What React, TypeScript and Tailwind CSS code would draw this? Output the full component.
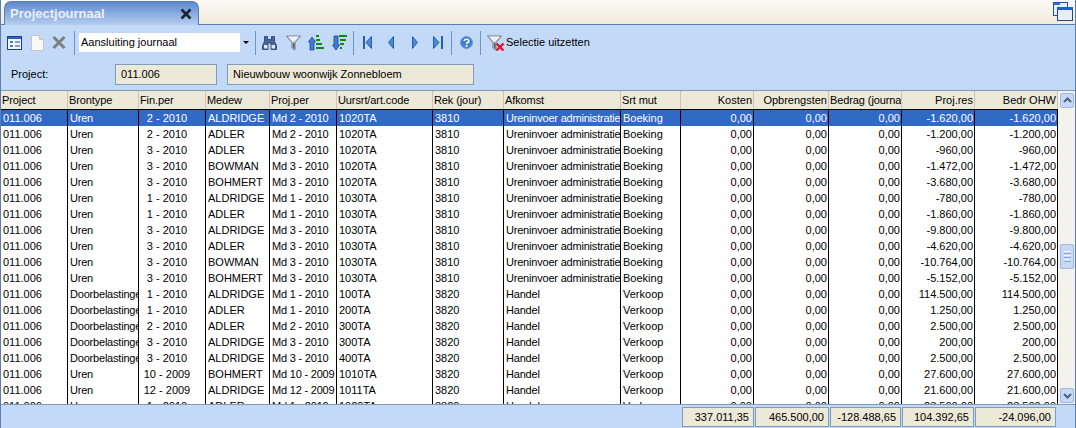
import React from "react"

const FONT = "font-['Liberation_Sans',Arial,sans-serif]"
const COLS = "grid grid-cols-[67px_71px_67px_64px_67px_96px_71px_117px_60px_73px_75px_73px_73px_83px]"

const headers: [string, boolean][] = [
  ["Project", false], ["Brontype", false], ["Fin.per", false], ["Medew", false], ["Proj.per", false],
  ["Uursrt/art.code", false], ["Rek (jour)", false], ["Afkomst", false], ["Srt mut", false],
  ["Kosten", true], ["Opbrengsten", true], ["Bedrag (journaal)", false], ["Proj.res", true], ["Bedr OHW", true],
]

type Row = [string, string, string, string, string, string, string]

const rows: Row[] = [
  ["Uren", "2 - 2010", "ALDRIDGE", "Md 2 - 2010", "1020TA", "3810", "-1.620,00"],
  ["Uren", "2 - 2010", "ADLER", "Md 2 - 2010", "1020TA", "3810", "-1.200,00"],
  ["Uren", "3 - 2010", "ADLER", "Md 3 - 2010", "1020TA", "3810", "-960,00"],
  ["Uren", "3 - 2010", "BOWMAN", "Md 3 - 2010", "1020TA", "3810", "-1.472,00"],
  ["Uren", "3 - 2010", "BOHMERT", "Md 3 - 2010", "1020TA", "3810", "-3.680,00"],
  ["Uren", "1 - 2010", "ALDRIDGE", "Md 1 - 2010", "1030TA", "3810", "-780,00"],
  ["Uren", "1 - 2010", "ADLER", "Md 1 - 2010", "1030TA", "3810", "-1.860,00"],
  ["Uren", "3 - 2010", "ALDRIDGE", "Md 3 - 2010", "1030TA", "3810", "-9.800,00"],
  ["Uren", "3 - 2010", "ADLER", "Md 3 - 2010", "1030TA", "3810", "-4.620,00"],
  ["Uren", "3 - 2010", "BOWMAN", "Md 3 - 2010", "1030TA", "3810", "-10.764,00"],
  ["Uren", "3 - 2010", "BOHMERT", "Md 3 - 2010", "1030TA", "3810", "-5.152,00"],
  ["Doorbelastingen", "1 - 2010", "ALDRIDGE", "Md 1 - 2010", "100TA", "3820", "114.500,00"],
  ["Doorbelastingen", "1 - 2010", "ADLER", "Md 1 - 2010", "200TA", "3820", "1.250,00"],
  ["Doorbelastingen", "2 - 2010", "ADLER", "Md 2 - 2010", "300TA", "3820", "2.500,00"],
  ["Doorbelastingen", "3 - 2010", "ALDRIDGE", "Md 3 - 2010", "300TA", "3820", "200,00"],
  ["Doorbelastingen", "3 - 2010", "ALDRIDGE", "Md 3 - 2010", "400TA", "3820", "2.500,00"],
  ["Uren", "10 - 2009", "BOHMERT", "Md 10 - 2009", "1010TA", "3820", "27.600,00"],
  ["Uren", "12 - 2009", "ALDRIDGE", "Md 12 - 2009", "1011TA", "3820", "21.600,00"],
  ["Uren", "1 - 2010", "ADLER", "Md 1 - 2010", "1020TA", "3820", "23.500,00"],
]

function Cell({ children, align = "left" }: { children: React.ReactNode; align?: "left" | "right" | "fin" | "tight" }) {
  const a =
    align === "right" ? "text-right pr-[1px]"
    : align === "fin" ? "text-center pr-[10px]"
    : align === "tight" ? "pl-[2px] tracking-[-0.2px]"
    : "pl-[2px]"
  return <div className={`border-r border-black overflow-hidden whitespace-nowrap leading-[16px] ${a}`}>{children}</div>
}

function Sep({ className }: { className: string }) {
  return <div className={`w-[1px] h-[24px] bg-[#6f93c9] ${className}`} />
}

function FilterIcon({ x = false, className }: { x?: boolean; className: string }) {
  return (
    <svg width={x ? 18 : 15} height="16" viewBox={x ? "0 0 18 16" : "0 0 15 16"} className={className}>
      <path d="M0.500 1h14L9 7.500V15L6 13V7.500z" fill="#b9c2cc" stroke="#737d88" />
      <path d="M2 1.500h11L8.500 6.500h-2z" fill="#eef2f6" />
      <path d="M7 8h1.500v5.500L7 12.500z" fill="#59636e" />
      {x && <path d="M9.500 8.500l7 7M16.500 8.500l-7 7" stroke="#e0182d" strokeWidth="2.400" />}
    </svg>
  )
}

function Toolbar() {
  return (
    <div className="h-[35px] shrink-0 flex items-center pl-[6px]">
      <svg width="15" height="14" viewBox="0 0 15 14" className="mr-[9px]">
        <rect x="0.500" y="0.500" width="14" height="13" fill="#f3f6fb" stroke="#1f3f8f" />
        <rect x="1" y="1" width="13" height="2" fill="#2a62c8" />
        <path d="M3 5h3v2H3zM3 9h3v2H3z" fill="#3d7fd6" />
        <path d="M8 6h5M8 10h5" stroke="#1f3f8f" />
      </svg>
      <svg width="13" height="16" viewBox="0 0 13 16" className="mr-[8px]">
        <path d="M0.500 0.500h8l4 4v11h-12z" fill="#f8f8f6" stroke="#c6c6c2" />
        <path d="M8.500 0.500v4h4" fill="#dcdbd7" stroke="#c6c6c2" />
      </svg>
      <svg width="14" height="15" viewBox="0 0 14 15" className="mr-[8px]">
        <path d="M1.500 2l11 11M12.500 2l-11 11" stroke="#7c7f82" strokeWidth="3" />
      </svg>
      <Sep className="mr-[4px]" />
      <div className="w-[173px] h-[19px] mr-[3px] bg-white flex items-center justify-between pl-[2px]">
        <span>Aansluiting journaal</span>
        <div className="w-[12px] h-[19px] bg-[#c2daf8] flex items-center justify-center">
          <div className="w-0 h-0 border-x-[3px] border-x-transparent border-t-[3px] border-t-black" />
        </div>
      </div>
      <Sep className="mr-[6px]" />
      <svg width="15" height="14" viewBox="0 0 15 14" className="mr-[9px]">
        <path d="M2.500 0.500h3v3h4v-3h3v5l2 4v4h-5.500V7h-3v6.500H0.500v-4l2-4z" fill="#46659a" stroke="#243b66" strokeWidth="0.800" />
        <rect x="2" y="9" width="3.500" height="3.500" fill="#dfe7f2" />
        <rect x="9.500" y="9" width="3.500" height="3.500" fill="#dfe7f2" />
      </svg>
      <FilterIcon className="mr-[7px]" />
      <svg width="16" height="17" viewBox="0 0 16 17" className="mr-[8px]">
        <path d="M4 3l3.500 5H6v8H2V8H0.500z" fill="#3f7fd0" stroke="#1f3f8f" strokeWidth="0.800" />
        <path d="M8 1h3v2H8zM8 5h4v2H8zM8 9h6v2H8zM8 13h8v2H8z" fill="#0b8a0b" />
      </svg>
      <svg width="15" height="17" viewBox="0 0 15 17" className="mr-[6px]">
        <path d="M4 16L7.500 11H6V2H2v9H0.500z" fill="#3f7fd0" stroke="#1f3f8f" strokeWidth="0.800" />
        <path d="M7 1h8v2H7zM8 5h6v2H8zM8 9h4v2H8zM8 13h2v2H8z" fill="#0b8a0b" />
      </svg>
      <Sep className="mr-[9px]" />
      <svg width="9" height="13" viewBox="0 0 9 13" className="mr-[16px]">
        <rect x="0" y="0" width="2" height="13" fill="#2a5ea8" />
        <path d="M8.500 0.500v12L3 6.500z" fill="#4a8ad8" stroke="#2a5ea8" />
      </svg>
      <svg width="6" height="13" viewBox="0 0 6 13" className="mr-[18px]">
        <path d="M5.500 0.500v12L0.500 6.500z" fill="#4a8ad8" stroke="#2a5ea8" />
      </svg>
      <svg width="6" height="13" viewBox="0 0 6 13" className="mr-[15px]">
        <path d="M0.500 0.500v12l5-6z" fill="#4a8ad8" stroke="#2a5ea8" />
      </svg>
      <svg width="10" height="13" viewBox="0 0 10 13" className="mr-[8px]">
        <path d="M0.500 0.500v12L6 6.500z" fill="#4a8ad8" stroke="#2a5ea8" />
        <rect x="8" y="0" width="2" height="13" fill="#2a5ea8" />
      </svg>
      <Sep className="mr-[8px]" />
      <svg width="13" height="13" viewBox="0 0 13 13" className="mr-[7px]">
        <circle cx="6.500" cy="6.500" r="6" fill="#3f80cf" stroke="#6a9bd4" />
        <path d="M4.200 5C4.400 2.700 8.800 2.500 8.800 5c0 1.500-2.200 1.500-2.200 3" fill="none" stroke="#fff" strokeWidth="1.600" />
        <rect x="5.700" y="9" width="1.800" height="1.800" fill="#fff" />
      </svg>
      <Sep className="mr-[6px]" />
      <FilterIcon x className="mr-[1px]" />
      <span>Selectie uitzetten</span>
    </div>
  )
}

export default function App() {
  return (
    <div className={`${FONT} w-[1076px] h-[428px] overflow-hidden flex flex-col bg-[#c2daf8] text-[11px] text-black border-x border-[#5b7db5]`}>
      {/* tab strip */}
      <div className="h-[25px] shrink-0 flex justify-between bg-gradient-to-b from-[#fbfaf6] to-[#efebdc] border-b border-[#5b7db5]">
        <div className="ml-[3px] mt-[1px] w-[195px] h-[24px] rounded-t-[7px] border border-b-0 border-[#5b7db5] bg-gradient-to-b from-[#5e8ad0] to-[#b5cdf0] flex items-center justify-between pl-[5px] pr-[5px]">
          <span className="text-[13px] font-bold text-[#e8f0fb]">Projectjournaal</span>
          <svg width="12" height="12" viewBox="0 0 12 12" className="mr-[1px]">
            <path d="M1.500 1.500l9 9M10.500 1.500l-9 9" stroke="#1a2430" strokeWidth="2.600" />
          </svg>
        </div>
        <svg width="21" height="21" viewBox="0 0 21 21" className="mr-[1px] mt-[1px]">
          <rect x="0.500" y="1.500" width="14" height="13" fill="#e8edf6" stroke="#1f4fa8" />
          <rect x="1" y="2" width="6" height="2" fill="#2a70e0" />
          <rect x="4.500" y="6.500" width="15" height="13" fill="#e8edf6" stroke="#27457f" />
          <rect x="4" y="6" width="16" height="3" fill="#1a5fe0" />
        </svg>
      </div>

      <Toolbar />

      {/* project fields */}
      <div className="h-[30px] shrink-0 flex items-start pt-[4px] pl-[10px]">
        <span className="w-[104px] leading-[20px]">Project:</span>
        <div className="w-[102px] h-[21px] bg-[#ece9d8] border border-[#7f9db9] leading-[19px] pl-[5px]">011.006</div>
        <div className="w-[247px] h-[21px] ml-[10px] bg-[#ece9d8] border border-[#7f9db9] leading-[19px] pl-[5px]">Nieuwbouw woonwijk Zonnebloem</div>
      </div>

      {/* grid + scrollbar */}
      <div className="flex-1 min-h-0 flex bg-white border-y border-[#7f9db9]">
        <div className="w-[1057px] overflow-hidden">
          <div className={`${COLS} h-[19px] bg-[#ece9d8] border-b border-black`}>
            {headers.map(([h, right]) => (
              <div key={h} className={`border-r border-[#c9c6b6] overflow-hidden whitespace-nowrap leading-[18px] ${right ? "text-right pr-[1px]" : "pl-[1px] tracking-[-0.1px]"}`}>{h}</div>
            ))}
          </div>
          {rows.map((r, i) => (
            <div key={i} className={`${COLS} h-[16px] ${i === 0 ? "bg-[#316ac5] text-white" : ""}`}>
              <Cell>011.006</Cell>
              <Cell align="tight">{r[0]}</Cell>
              <Cell align="fin">{r[1]}</Cell>
              <Cell>{r[2]}</Cell>
              <Cell align="tight">{r[3]}</Cell>
              <Cell>{r[4]}</Cell>
              <Cell>{r[5]}</Cell>
              <Cell align="tight">{i < 11 ? "Ureninvoer administratie" : "Handel"}</Cell>
              <Cell>{i < 11 ? "Boeking" : "Verkoop"}</Cell>
              <Cell align="right">0,00</Cell>
              <Cell align="right">0,00</Cell>
              <Cell align="right">0,00</Cell>
              <Cell align="right">{r[6]}</Cell>
              <Cell align="right">{r[6]}</Cell>
            </div>
          ))}
        </div>
        <div className="w-[17px] pl-[2px] pr-[1px] bg-[#f3f2ec] flex flex-col">
          <div className="h-[15px] mt-[2px] bg-[#c6d8f6] border border-[#9db8e6] rounded-[2px] flex items-center justify-center">
            <svg width="9" height="7" viewBox="0 0 9 7"><path d="M1 5l3.500-3.500L8 5" fill="none" stroke="#4d6185" strokeWidth="2" /></svg>
          </div>
          <div className="flex-1 pt-[136px]">
            <div className="h-[25px] bg-[#c6d8f6] border border-[#9db8e6] rounded-[2px] flex flex-col items-center justify-center gap-[1px]">
              <div className="w-[7px] h-[1px] bg-[#f3f7fe]" />
              <div className="w-[7px] h-[1px] bg-[#8ea8d8]" />
              <div className="w-[7px] h-[1px] bg-[#f3f7fe]" />
              <div className="w-[7px] h-[1px] bg-[#8ea8d8]" />
              <div className="w-[7px] h-[1px] bg-[#f3f7fe]" />
              <div className="w-[7px] h-[1px] bg-[#8ea8d8]" />
            </div>
          </div>
          <div className="h-[15px] mb-[1px] bg-[#c6d8f6] border border-[#9db8e6] rounded-[2px] flex items-center justify-center">
            <svg width="9" height="7" viewBox="0 0 9 7"><path d="M1 2l3.500 3.500L8 2" fill="none" stroke="#4d6185" strokeWidth="2" /></svg>
          </div>
        </div>
      </div>

      {/* totals */}
      <div className="h-[23px] shrink-0 flex justify-end items-start pt-[2px] pr-[19px]">
        <div className="w-[72px] h-[20px] ml-[1px] bg-[#ece9d8] border border-[#7f9db9] text-right pr-[4px] leading-[18px]">337.011,35</div>
        <div className="w-[74px] h-[20px] ml-[1px] bg-[#ece9d8] border border-[#7f9db9] text-right pr-[4px] leading-[18px]">465.500,00</div>
        <div className="w-[71px] h-[20px] ml-[1px] bg-[#ece9d8] border border-[#7f9db9] text-right pr-[4px] leading-[18px]">-128.488,65</div>
        <div className="w-[72px] h-[20px] ml-[1px] bg-[#ece9d8] border border-[#7f9db9] text-right pr-[4px] leading-[18px]">104.392,65</div>
        <div className="w-[81px] h-[20px] ml-[1px] bg-[#ece9d8] border border-[#7f9db9] text-right pr-[4px] leading-[18px]">-24.096,00</div>
      </div>
    </div>
  )
}
